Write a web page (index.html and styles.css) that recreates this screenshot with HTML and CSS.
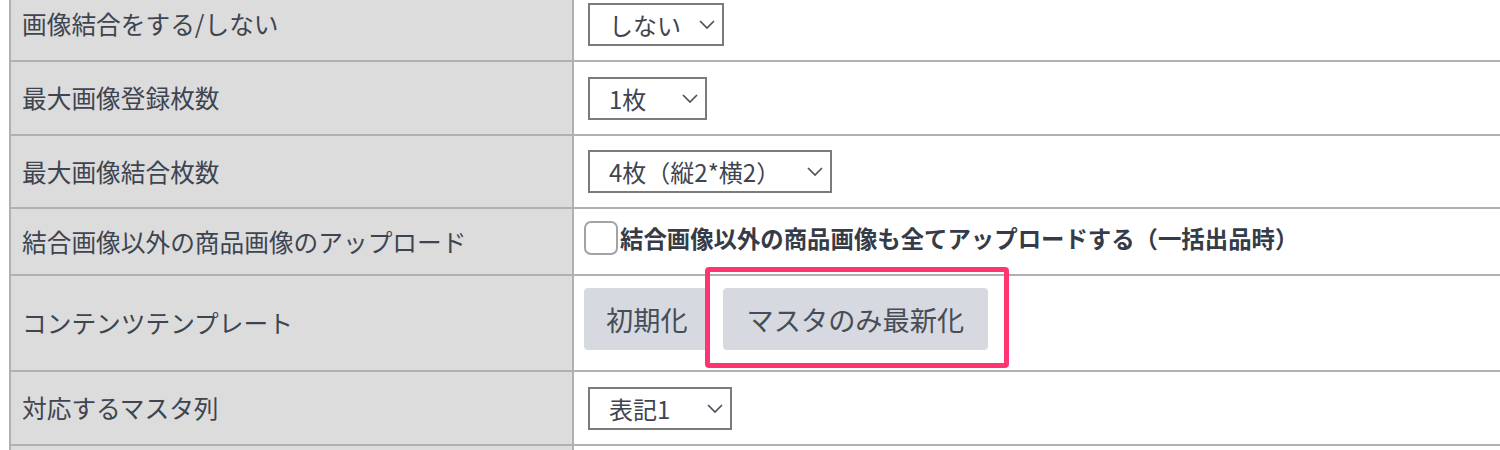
FILE: index.html
```html
<!DOCTYPE html>
<html lang="ja">
<head>
<meta charset="utf-8">
<title>設定</title>
<link rel="stylesheet" href="styles.css">
</head>
<body>
<table class="settings">
  <tbody>
    <tr>
      <td class="label"><div class="cell h72">画像結合をする/しない</div></td>
      <td class="value"><div class="cell h72">
        <select class="select w-136"><option>しない</option><option>する</option></select>
      </div></td>
    </tr>
    <tr>
      <td class="label"><div class="cell h72">最大画像登録枚数</div></td>
      <td class="value"><div class="cell h72">
        <select class="select w-119"><option>1枚</option><option>2枚</option></select>
      </div></td>
    </tr>
    <tr>
      <td class="label"><div class="cell h71">最大画像結合枚数</div></td>
      <td class="value"><div class="cell h71">
        <select class="select w-244"><option>4枚（縦2*横2）</option><option>2枚（縦1*横2）</option></select>
      </div></td>
    </tr>
    <tr>
      <td class="label"><div class="cell h65">結合画像以外の商品画像のアップロード</div></td>
      <td class="value"><div class="cell h65 raise">
        <label class="check">
          <input type="checkbox" class="check-box">
          <span class="check-text">結合画像以外の商品画像も全てアップロードする（一括出品時）</span>
        </label>
      </div></td>
    </tr>
    <tr>
      <td class="label"><div class="cell h94">コンテンツテンプレート</div></td>
      <td class="value"><div class="cell h94 raise">
        <button class="btn btn-first" type="button">初期化</button>
        <button class="btn" type="button">マスタのみ最新化</button>
        <span class="highlight"></span>
      </div></td>
    </tr>
    <tr>
      <td class="label"><div class="cell h72">対応するマスタ列</div></td>
      <td class="value"><div class="cell h72">
        <select class="select w-144"><option>表記1</option><option>表記2</option></select>
      </div></td>
    </tr>
    <tr class="last">
      <td class="label"><div class="cell h4"></div></td>
      <td class="value"><div class="cell h4"></div></td>
    </tr>
  </tbody>
</table>
</body>
</html>
```

FILE: styles.css
```css
html, body {
  margin: 0;
  padding: 0;
  background: #ffffff;
  overflow: hidden;
}

.settings {
  margin: -14px 0 0 9px;
  border-collapse: separate;
  border-spacing: 0;
  border-left: 2px solid #b0b0b0;
  border-top: 2px solid #b0b0b0;
  width: 1491px;
  font-family: "Noto Sans CJK JP", "Noto Sans", sans-serif;
  color: #3e4450;
}

.settings td {
  padding: 0;
  border-right: 2px solid #b0b0b0;
  border-bottom: 2px solid #b0b0b0;
  vertical-align: top;
}

.settings td.value {
  border-right: none;
}

.settings .last td {
  border-bottom: none;
}

.label {
  width: 561px;
  background: #dcdcdc;
}

.value {
  background: #ffffff;
}

.cell {
  display: flex;
  align-items: center;
  box-sizing: border-box;
  position: relative;
}

.label .cell {
  padding-left: 11px;
  font-size: 24.7px;
  line-height: 1.2;
  white-space: nowrap;
}

.value .cell {
  padding-left: 10px;
}

.h72 { height: 72px; }
.h71 { height: 71px; }
.h65 { height: 65px; }
.h94 { height: 94px; }
.h4 { height: 4px; }

.raise { padding-bottom: 8px; }

.select {
  -webkit-appearance: none;
  appearance: none;
  margin: 0 0 0 4px;
  height: 43px;
  box-sizing: border-box;
  border: 2px solid #7b7b7b;
  border-radius: 0;
  padding: 0 0 0 19px;
  font-family: "Noto Sans CJK JP", "Noto Sans", sans-serif;
  font-size: 24px;
  color: #3e4450;
  background-color: #ffffff;
  background-image: url("data:image/svg+xml,%3Csvg xmlns='http://www.w3.org/2000/svg' width='16' height='9' viewBox='0 0 16 9'%3E%3Cpath d='M1 1 L8 8 L15 1' fill='none' stroke='%234d525c' stroke-width='1.7'/%3E%3C/svg%3E");
  background-repeat: no-repeat;
  background-position: right 7px center;
  background-size: 16px 9px;
}

.w-136 { width: 136px; }
.w-119 { width: 119px; }
.w-244 { width: 244px; }
.w-144 { width: 144px; }

.check {
  display: flex;
  align-items: center;
}

.check-box {
  -webkit-appearance: none;
  appearance: none;
  margin: 0 2px 0 0;
  width: 34px;
  height: 34px;
  box-sizing: border-box;
  border: 2px solid #a3a3a3;
  border-radius: 7px;
  background: #ffffff;
}

.check-text {
  font-size: 23.4px;
  font-weight: 700;
  color: #363c47;
  white-space: nowrap;
}

.btn {
  height: 62px;
  border: none;
  border-radius: 4px;
  background: #d6d9e0;
  color: #474d57;
  font-family: "Noto Sans CJK JP", "Noto Sans", sans-serif;
  font-size: 27.2px;
  padding: 0 24px;
  margin: 0;
  white-space: nowrap;
}

.btn-first {
  padding: 0 22px;
  margin-right: 13px;
}

.highlight {
  position: absolute;
  left: 131px;
  top: -9px;
  width: 304px;
  height: 101px;
  box-sizing: border-box;
  border: 5px solid #ff3572;
  border-radius: 4px;
  pointer-events: none;
}
```
